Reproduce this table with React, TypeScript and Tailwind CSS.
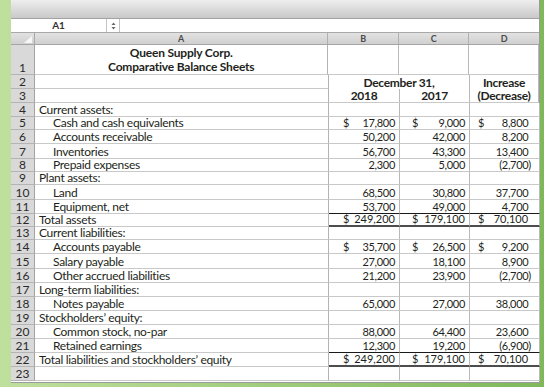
import React from "react";

type R = {
  n: number;
  h: number;
  a?: string;
  ind?: number;
  b?: string;
  c?: string;
  d?: string;
  dollar?: boolean;
  single?: boolean;
  dbl?: boolean;
};

const rows: R[] = [
  { n: 4, h: 14, a: "Current assets:" },
  { n: 5, h: 13, a: "Cash and cash equivalents", ind: 1, b: "17,800", c: "9,000", d: "8,800", dollar: true },
  { n: 6, h: 14, a: "Accounts receivable", ind: 1, b: "50,200", c: "42,000", d: "8,200" },
  { n: 7, h: 15, a: "Inventories", ind: 1, b: "56,700", c: "43,300", d: "13,400" },
  { n: 8, h: 13, a: "Prepaid expenses", ind: 1, b: "2,300", c: "5,000", d: "(2,700)" },
  { n: 9, h: 13, a: "Plant assets:" },
  { n: 10, h: 15, a: "Land", ind: 1, b: "68,500", c: "30,800", d: "37,700" },
  { n: 11, h: 14, a: "Equipment, net", ind: 1, b: "53,700", c: "49,000", d: "4,700", single: true },
  { n: 12, h: 13, a: "Total assets", b: "249,200", c: "179,100", d: "70,100", dollar: true, dbl: true },
  { n: 13, h: 13, a: "Current liabilities:" },
  { n: 14, h: 14, a: "Accounts payable", ind: 1, b: "35,700", c: "26,500", d: "9,200", dollar: true },
  { n: 15, h: 15, a: "Salary payable", ind: 1, b: "27,000", c: "18,100", d: "8,900" },
  { n: 16, h: 14, a: "Other accrued liabilities", ind: 1, b: "21,200", c: "23,900", d: "(2,700)" },
  { n: 17, h: 14, a: "Long-term liabilities:" },
  { n: 18, h: 14, a: "Notes payable", ind: 1, b: "65,000", c: "27,000", d: "38,000" },
  { n: 19, h: 14, a: "Stockholders\u2019 equity:" },
  { n: 20, h: 14, a: "Common stock, no-par", ind: 1, b: "88,000", c: "64,400", d: "23,600" },
  { n: 21, h: 14, a: "Retained earnings", ind: 1, b: "12,300", c: "19,200", d: "(6,900)", single: true },
  { n: 22, h: 14, a: "Total liabilities and stockholders\u2019 equity", b: "249,200", c: "179,100", d: "70,100", dollar: true, dbl: true },
  { n: 23, h: 14 },
];

function RowHead({ n, h }: { n?: number; h: number }) {
  return (
    <div
      className="w-[24px] shrink-0 bg-[#d9d9d9] border-r border-b border-r-[#a3a3a3] border-b-[#b4b4b4] flex items-end justify-center text-[12px] leading-[12px] tracking-normal text-[#2a2a2a]"
      style={{ height: h }}
    >
      {n}
    </div>
  );
}

function NumCell({
  v,
  dollar,
  col,
  single,
  dbl,
}: {
  v?: string;
  dollar?: boolean;
  col: "b" | "c" | "d";
  single?: boolean;
  dbl?: boolean;
}) {
  const w = col === "b" ? "w-[71px]" : "w-[70px]";
  const pl = col === "b" ? "pl-[14px]" : col === "c" ? "pl-[12px]" : "pl-[8px]";
  const pr = col === "d" ? "pr-[8px]" : "pr-[4px]";
  const border = dbl
    ? "border-b-2 border-b-[#4d4d4d]"
    : single
    ? "border-b border-b-[#1a1a1a]"
    : "border-b border-b-[#c9c9c9]";
  const paren = v && !v.startsWith("(") && col === "d";
  const track = dbl ? "tracking-[0px]" : "tracking-[-0.3px]";
  return (
    <div
      className={`${w} shrink-0 h-full border-r border-r-[#b9b9b9] ${border} flex items-end justify-between ${pl} ${pr} text-[11px] leading-[12px] whitespace-nowrap`}
    >
      <span>{v && dollar ? "$" : ""}</span>
      <span className={track}>
        {v}
        {paren ? <span className="invisible">)</span> : null}
      </span>
    </div>
  );
}

function BodyRow({ r }: { r: R }) {
  return (
    <div className="flex" style={{ height: r.h }}>
      <RowHead n={r.n} h={r.h} />
      <div
        className={`w-[294px] shrink-0 h-full border-r border-b border-r-[#b3b3b3] border-b-[#c9c9c9] flex items-end whitespace-nowrap leading-[12px] tracking-[-0.3px] ${
          r.ind ? "pl-[18px]" : "pl-[4px]"
        }`}
      >
        {r.a}
      </div>
      <NumCell v={r.b} dollar={r.dollar} col="b" single={r.single} dbl={r.dbl} />
      <NumCell v={r.c} dollar={r.dollar} col="c" single={r.single} dbl={r.dbl} />
      <NumCell v={r.d} dollar={r.dollar} col="d" single={r.single} dbl={r.dbl} />
    </div>
  );
}

export default function App() {
  return (
    <div className="w-[544px] h-[387px] overflow-hidden bg-gradient-to-r from-[#bfe09c] to-[#7fb85a] font-[Lato,sans-serif] text-[12px] leading-[13px] text-[#231f20]">
      <div className="ml-[11px] w-[529px] h-[383px] bg-white flex flex-col border-r border-b border-r-[#9a9a9a] border-b-[#9a9a9a]">
        {/* top toolbar strip */}
        <div className="h-[19px] shrink-0 bg-gradient-to-b from-[#eeeeee] to-[#c9c9c9] border-b border-b-[#a2a2a2]" />
        {/* name box row */}
        <div className="h-[14px] shrink-0 flex border-b border-b-[#a9a9a9]">
          <div className="w-[96px] flex items-center justify-center text-[10px] font-bold text-[#333] border-r border-r-[#c4c4c4]">
            A1
          </div>
          <div className="w-[13px] flex items-center justify-center border-r border-r-[#c4c4c4]">
            <svg width="5" height="8" viewBox="0 0 5 8">
              <path d="M2.5 0.5 L4.5 3 L0.5 3 Z" fill="#666" />
              <path d="M2.5 7.5 L4.5 5 L0.5 5 Z" fill="#666" />
            </svg>
          </div>
          <div className="flex-1" />
        </div>
        {/* column header row */}
        <div className="h-[12px] shrink-0 flex bg-gradient-to-b from-[#e2e2e2] to-[#d0d0d0] border-b border-b-[#a5a5a5] text-[9px] leading-[11px] font-bold text-[#4a4a4a]">
          <div className="w-[24px] relative border-r border-r-[#a8a8a8]">
            <svg className="absolute right-[2px] bottom-[1px]" width="8" height="7" viewBox="0 0 8 7">
              <path d="M8 0 L8 7 L0 7 Z" fill="#f7f7f7" />
            </svg>
          </div>
          <div className="w-[294px] text-center border-r border-r-[#b0b0b0]">A</div>
          <div className="w-[71px] text-center border-r border-r-[#b0b0b0]">B</div>
          <div className="w-[70px] text-center border-r border-r-[#b0b0b0]">C</div>
          <div className="w-[70px] text-center">D</div>
        </div>
        {/* row 1 */}
        <div className="flex h-[30px] shrink-0">
          <RowHead n={1} h={30} />
          <div className="w-[294px] h-full border-r border-b border-r-[#b3b3b3] border-b-[#c9c9c9] flex flex-col items-center justify-end font-bold leading-[14px] tracking-[-0.2px]">
            <div>Queen Supply Corp.</div>
            <div>Comparative Balance Sheets</div>
          </div>
          <div className="w-[71px] h-full border-r border-b border-r-[#b9b9b9] border-b-[#c9c9c9]" />
          <div className="w-[70px] h-full border-r border-b border-r-[#b9b9b9] border-b-[#c9c9c9]" />
          <div className="w-[70px] h-full border-r border-b border-r-[#b9b9b9] border-b-[#c9c9c9]" />
        </div>
        {/* rows 2-3 */}
        <div className="flex h-[28px] shrink-0">
          <div className="flex flex-col">
            <div className="flex h-[14px]">
              <RowHead n={2} h={14} />
              <div className="w-[294px] h-full border-r border-b border-r-[#b3b3b3] border-b-[#c9c9c9]" />
            </div>
            <div className="flex h-[14px]">
              <RowHead n={3} h={14} />
              <div className="w-[294px] h-full border-r border-b border-r-[#b3b3b3] border-b-[#c9c9c9]" />
            </div>
          </div>
          <div className="w-[141px] h-full flex flex-col border-r border-b border-r-[#b9b9b9] border-b-[#c9c9c9] font-bold tracking-[-0.3px]">
            <div className="h-[14px] flex items-end justify-center">December 31,</div>
            <div className="h-[13px] flex">
              <div className="w-[71px] border-r border-r-[#b9b9b9] flex items-end justify-center">2018</div>
              <div className="w-[69px] flex items-end justify-center">2017</div>
            </div>
          </div>
          <div className="w-[70px] h-full flex flex-col items-center justify-end border-r border-b border-r-[#b9b9b9] border-b-[#c9c9c9] font-bold leading-[13px] tracking-[-0.3px]">
            <div>Increase</div>
            <div>(Decrease)</div>
          </div>
        </div>
        {rows.map((r) => (
          <BodyRow key={r.n} r={r} />
        ))}
      </div>
    </div>
  );
}
